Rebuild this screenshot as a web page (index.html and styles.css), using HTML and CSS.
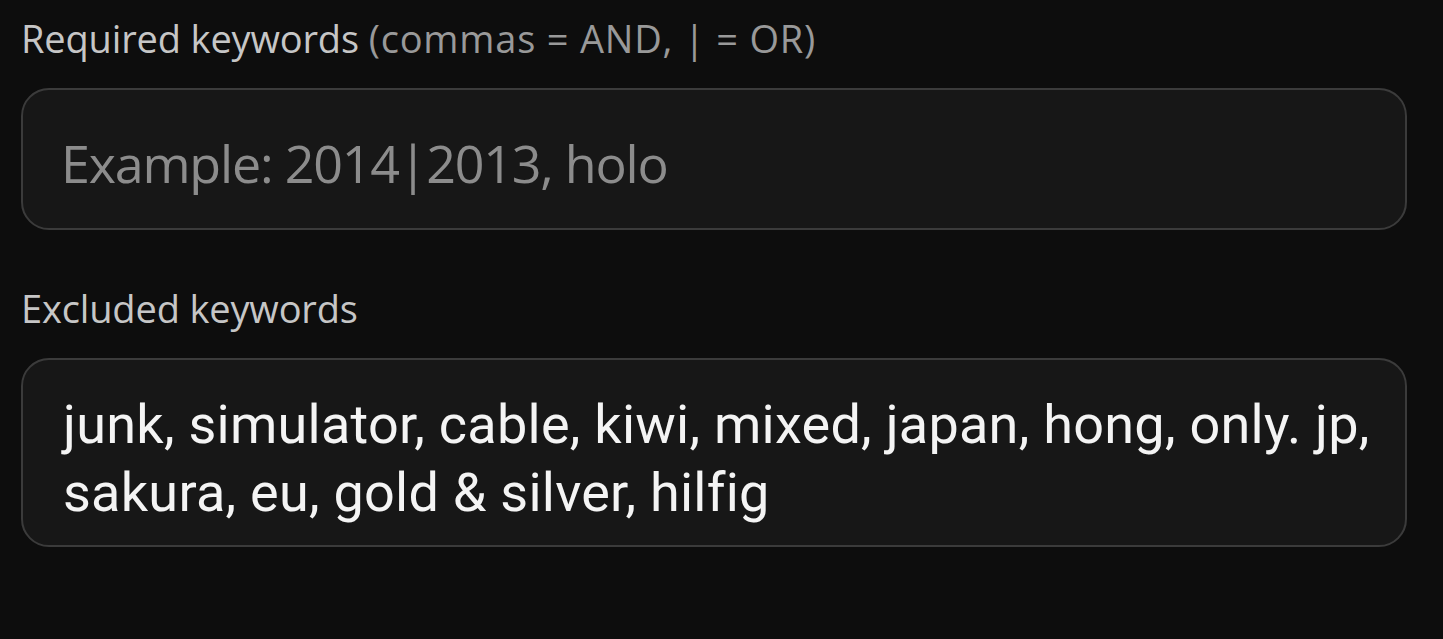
FILE: index.html
```html
<!DOCTYPE html>
<html>
<head>
<meta charset="utf-8">
<link rel="stylesheet" href="styles.css">
</head>
<body>
<div class="form">
  <div class="field">
    <label class="label">Required keywords <span class="hint">(commas = AND, | = OR)</span></label>
    <div class="input"><span class="placeholder">Example: 2014|2013, holo</span></div>
  </div>
  <div class="field">
    <label class="label">Excluded keywords</label>
    <div class="input multi"><span class="value">junk, simulator, cable, kiwi, mixed, japan, hong, only. jp, sakura, eu, gold &amp; silver, hilfig</span></div>
  </div>
</div>
</body>
</html>
```
FILE: styles.css
```css
html, body {
  margin: 0;
  padding: 0;
  background: #0d0d0d;
}
.form {
  display: flex;
  flex-direction: column;
  padding: 15px 36px 0 21px;
  gap: 55px;
}
.field {
  display: flex;
  flex-direction: column;
  gap: 27px;
}
.label {
  font-family: "Open Sans", sans-serif;
  font-size: 38px;
  line-height: 46px;
  color: #c6c6c6;
  letter-spacing: -0.15px;
}
.hint {
  color: #999999;
  letter-spacing: 0.8px;
}
.input {
  box-sizing: border-box;
  height: 142px;
  border: 2px solid #3b3b3b;
  border-radius: 28px;
  background: #171717;
  display: flex;
  align-items: center;
  padding: 6px 38px 0;
}
.placeholder {
  font-family: "Open Sans", sans-serif;
  font-size: 52px;
  letter-spacing: -1.2px;
  color: #8c8c8c;
}
.multi {
  height: 189px;
  padding: 12px 30px 0 40px;
}
.value {
  font-family: Roboto, sans-serif;
  font-size: 54px;
  line-height: 68px;
  letter-spacing: 0.25px;
  color: #f4f4f4;
}
```
